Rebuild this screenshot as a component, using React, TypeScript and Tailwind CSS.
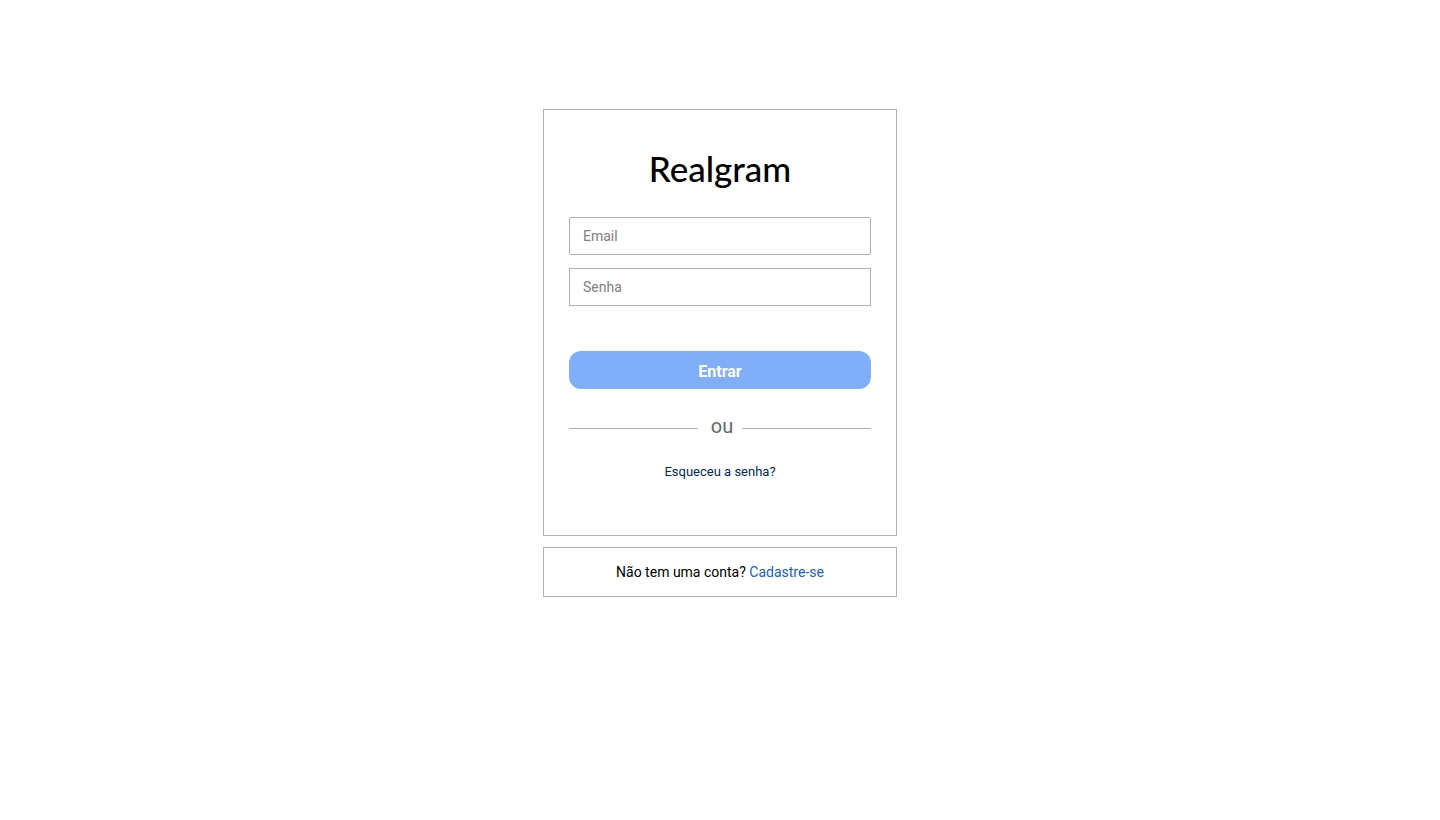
import { useState } from "react";

const fieldClass =
  "h-[38px] w-full border border-[#b0b0b0] bg-white px-[13px] text-sm text-black placeholder:text-[#808080] focus:outline-none focus:border-[#555555]";

function Divider() {
  return (
    <div className="mt-[23px] flex h-7 items-center">
      <span className="mt-1 h-px flex-1 bg-[#b0b0b0]" />
      <span className="pl-[13px] pr-[9px] text-xl leading-7 text-[#666666]">ou</span>
      <span className="mt-1 h-px flex-1 bg-[#b0b0b0]" />
    </div>
  );
}

export default function App() {
  const [email, setEmail] = useState("");
  const [password, setPassword] = useState("");

  return (
    <main className="flex min-h-screen flex-col items-center bg-white px-4 pt-[109px] pb-8 font-['Roboto',sans-serif]">
      <div className="flex w-full max-w-[354px] flex-col gap-[11px]">
        <section className="border border-[#b0b0b0] px-[25px] pt-9 pb-[53px]">
          <h1 className="text-center font-['Lato',sans-serif] text-[35px] font-medium leading-[44px] text-black">
            Realgram
          </h1>
          <form
            className="mt-[27px] flex flex-col"
            onSubmit={(event) => event.preventDefault()}
          >
            <input
              type="email"
              aria-label="Email"
              placeholder="Email"
              value={email}
              onChange={(event) => setEmail(event.target.value)}
              className={`${fieldClass} rounded-xs`}
            />
            <input
              type="password"
              aria-label="Senha"
              placeholder="Senha"
              value={password}
              onChange={(event) => setPassword(event.target.value)}
              className={`${fieldClass} mt-[13px]`}
            />
            <button
              type="submit"
              className="mt-[45px] h-[38px] rounded-xl bg-[#80aef8] pt-1 text-base font-bold text-white"
            >
              Entrar
            </button>
          </form>
          <Divider />
          <p className="mt-[22px] text-center text-[13px] leading-5">
            <a href="#recuperar" className="text-[#00295f]">
              Esqueceu a senha?
            </a>
          </p>
        </section>
        <section className="flex h-[50px] items-center justify-center border border-[#b0b0b0] text-sm text-black">
          <p>
            Não tem uma conta?{" "}
            <a href="#cadastro" className="text-[#1560d4]">
              Cadastre-se
            </a>
          </p>
        </section>
      </div>
    </main>
  );
}
